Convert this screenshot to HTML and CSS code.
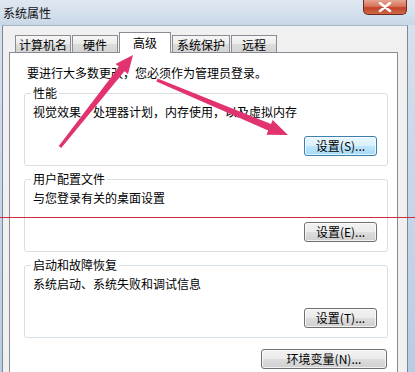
FILE: index.html
```html
<!DOCTYPE html>
<html lang="zh-CN">
<head>
<meta charset="utf-8">
<title>系统属性</title>
<link rel="stylesheet" href="styles.css">
</head>
<body>
<div class="titlebar">
  <span class="title">系统属性</span>
  <div class="close"><svg width="14" height="10" viewBox="0 0 14 10"><path d="M2 1 L12 9 M12 1 L2 9" stroke="#ffffff" stroke-width="2.6" stroke-linecap="round"/></svg></div>
</div>
<div class="window">
  <div class="tabs">
    <div class="tab t1">计算机名</div>
    <div class="tab t2">硬件</div>
    <div class="tab sel">高级</div>
    <div class="tab t4">系统保护</div>
    <div class="tab t5">远程</div>
  </div>
  <div class="panel">
    <p class="intro">要进行大多数更改，您必须作为管理员登录。</p>
    <fieldset class="group">
      <legend>性能</legend>
      <div class="desc">视觉效果，处理器计划，内存使用，以及虚拟内存</div>
      <div class="actions"><button class="btn focus">设置(S)...</button></div>
    </fieldset>
    <fieldset class="group">
      <legend>用户配置文件</legend>
      <div class="desc">与您登录有关的桌面设置</div>
      <div class="actions"><button class="btn">设置(E)...</button></div>
    </fieldset>
    <fieldset class="group">
      <legend>启动和故障恢复</legend>
      <div class="desc">系统启动、系统失败和调试信息</div>
      <div class="actions"><button class="btn">设置(T)...</button></div>
    </fieldset>
    <div class="env-row"><button class="btn env">环境变量(N)...</button></div>
  </div>
</div>
<div class="redline"></div>
<svg class="arrows" width="415" height="372" viewBox="0 0 415 372">
  <polygon fill="#e1336f" points="58.8,146.1 119.1,66.8 115.6,64.0 133,55 128.0,74.0 124.5,71.2 61.2,147.9"/>
  <polygon fill="#e1336f" points="157.6,78.6 271.0,124.1 272.7,119.9 288,135 266.5,134.7 268.2,130.5 156.4,81.4"/>
</svg>
</body>
</html>
```

FILE: styles.css
```css
html, body {
  margin: 0;
  padding: 0;
}
body {
  width: 415px;
  height: 372px;
  overflow: hidden;
  position: relative;
  font-family: "Noto Sans CJK SC", "Noto Sans", sans-serif;
  font-size: 12px;
  color: #000;
  background: linear-gradient(to bottom, #d6e2ee 0%, #c9d9ea 40%, #b7cde5 100%);
}
.titlebar {
  height: 25px;
  display: flex;
  align-items: center;
  padding-left: 3px;
  background: linear-gradient(to bottom, #dfe8f1 0%, #d2dfec 60%, #c8d7e7 100%);
}
.title {
  font-size: 12px;
  line-height: 14px;
  color: #111;
}
.close {
  margin-left: auto;
  margin-right: 8px;
  align-self: flex-start;
  width: 44px;
  height: 15px;
  box-sizing: border-box;
  border: 1px solid #6e2a22;
  border-top: none;
  border-radius: 0 0 5px 5px;
  background: linear-gradient(to bottom, #e7a493 0%, #d9745c 45%, #c2432a 55%, #cf6a45 100%);
  display: flex;
  align-items: center;
  justify-content: center;
}
.close svg {
  display: block;
}
.window {
  margin-left: 2px;
  width: 406px;
  height: 347px;
  box-sizing: border-box;
  background: #f0f0f0;
  border-left: 1px solid #7d8896;
  border-right: 1px solid #7d8896;
  border-top: 1px solid #a9b6c4;
  padding: 6px 0 0 6px;
}
.tabs {
  display: flex;
  align-items: flex-end;
  height: 20px;
  padding-left: 6px;
}
.tab {
  box-sizing: border-box;
  height: 17px;
  border: 1px solid #898c95;
  border-bottom: none;
  background: linear-gradient(to bottom, #f6f6f6 0%, #ebebeb 50%, #dcdcdc 51%, #d4d4d4 100%);
  line-height: 15px;
  text-align: center;
  white-space: nowrap;
  padding-top: 1px;
}
.t1 { width: 56px; }
.t2 { width: 46px; margin-left: 1px; }
.sel {
  width: 52px;
  height: 21px;
  margin-left: 1px;
  margin-bottom: -1px;
  background: #ffffff;
  position: relative;
  z-index: 1;
  line-height: 15px;
  padding-top: 2px;
}
.t4 { width: 58px; margin-left: 1px; }
.t5 { width: 46px; margin-left: 1px; }
.panel {
  width: 389px;
  height: 330px;
  box-sizing: border-box;
  background: #ffffff;
  border: 1px solid #898c95;
  padding: 13px 9px 0 14px;
}
.intro {
  margin: 0 0 0 3px;
  line-height: 14px;
}
.group {
  margin: 6px 0 0 0;
  padding: 5px 10px 9px 8px;
  border: 1px solid #d5dfe5;
  border-radius: 3px;
  min-width: 0;
}
.group legend {
  padding: 0 2px;
  margin-left: -2px;
  line-height: 14px;
}
.desc {
  line-height: 14px;
}
.actions {
  margin-top: 17px;
  display: flex;
  justify-content: flex-end;
}
.btn {
  width: 73px;
  height: 20px;
  box-sizing: border-box;
  padding: 0;
  font-family: "Noto Sans CJK SC", "Noto Sans", sans-serif;
  font-size: 12px;
  line-height: 16px;
  color: #000;
  border: 1px solid #707070;
  border-radius: 3px;
  background: linear-gradient(to bottom, #f2f2f2 0%, #ebebeb 50%, #dddddd 51%, #cfcfcf 100%);
  box-shadow: inset 0 0 0 1px rgba(255,255,255,0.7);
  white-space: nowrap;
}
.btn.focus {
  border-color: #3c7fb1;
  background: linear-gradient(to bottom, #eaf6fd 0%, #d9f0fc 50%, #bee6fd 51%, #a7d9f5 100%);
}
.env-row {
  margin-top: 11px;
  display: flex;
  justify-content: flex-end;
  padding-right: 1px;
}
.btn.env {
  width: 126px;
}
.redline {
  position: absolute;
  left: 0;
  top: 217px;
  width: 415px;
  height: 1px;
  background: #cc2e3c;
  z-index: 5;
}
.arrows {
  position: absolute;
  left: 0;
  top: 0;
  pointer-events: none;
  z-index: 6;
}
```
